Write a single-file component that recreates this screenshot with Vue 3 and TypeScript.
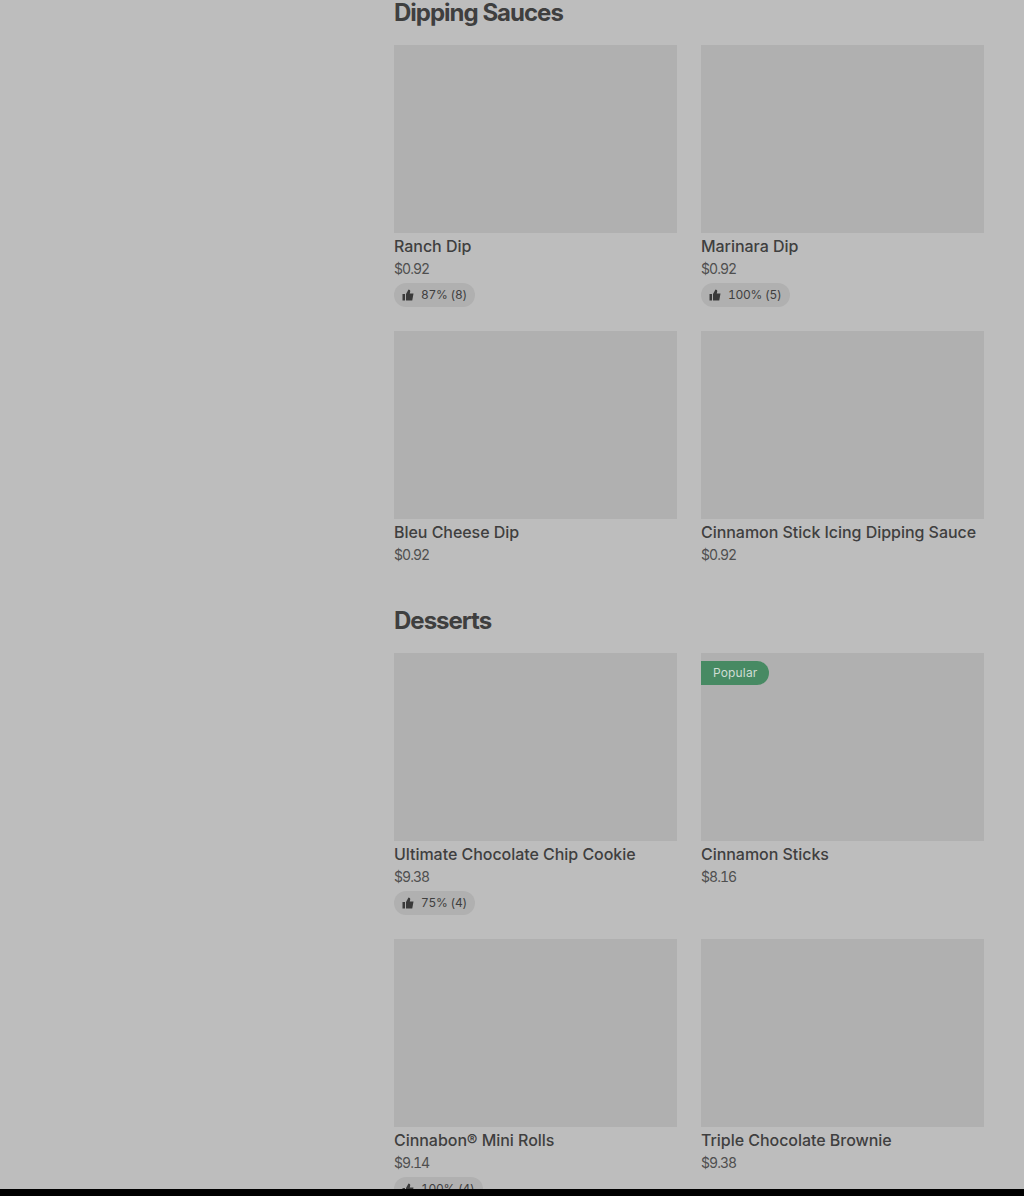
<script setup lang="ts">
interface Item {
  name: string;
  price: string;
  rating?: string;
  badge?: string;
}

interface Section {
  title: string;
  items: Item[];
}

const sections: Section[] = [
  {
    title: "Dipping Sauces",
    items: [
      { name: "Ranch Dip", price: "$0.92", rating: "87% (8)" },
      { name: "Marinara Dip", price: "$0.92", rating: "100% (5)" },
      { name: "Bleu Cheese Dip", price: "$0.92" },
      { name: "Cinnamon Stick Icing Dipping Sauce", price: "$0.92" },
    ],
  },
  {
    title: "Desserts",
    items: [
      { name: "Ultimate Chocolate Chip Cookie", price: "$9.38", rating: "75% (4)" },
      { name: "Cinnamon Sticks", price: "$8.16", badge: "Popular" },
      { name: "Cinnabon® Mini Rolls", price: "$9.14", rating: "100% (4)" },
      { name: "Triple Chocolate Brownie", price: "$9.38" },
    ],
  },
];
</script>

<template>
  <div class="page">
    <main class="menu">
      <section v-for="section in sections" :key="section.title" class="section">
        <h2>{{ section.title }}</h2>
        <div class="grid">
          <article v-for="item in section.items" :key="item.name" class="card">
            <div class="thumb">
              <span v-if="item.badge" class="badge">{{ item.badge }}</span>
            </div>
            <div class="name">{{ item.name }}</div>
            <div class="price">{{ item.price }}</div>
            <div v-if="item.rating" class="rating">
              <svg viewBox="0 0 24 24" width="12" height="12" aria-hidden="true">
                <path d="M1 10h5v13H1zM8 10l5-9c2 0 3.500 1.500 3.500 3.500L15.500 9H23l-2.500 14H8z" />
              </svg>
              <span class="score">{{ item.rating }}</span>
            </div>
          </article>
        </div>
      </section>
    </main>
  </div>
</template>

<style scoped>
.page {
  height: 1189px;
  overflow: hidden;
  background: #bdbdbd;
  font-family: Inter, "Liberation Sans", sans-serif;
  color: #3f3f3f;
}

.menu {
  margin: -3px 40px 0 394px;
  display: flex;
  flex-direction: column;
  gap: 40px;
}

h2 {
  margin: 0 0 16px;
  font-size: 24px;
  line-height: 32px;
  font-weight: 700;
  letter-spacing: -1px;
}

.grid {
  display: grid;
  grid-template-columns: 283px 283px;
  column-gap: 24px;
  row-gap: 24px;
}

.thumb {
  position: relative;
  height: 188px;
  background: #b0b0b0;
}

.badge {
  position: absolute;
  top: 8px;
  left: 0;
  height: 24px;
  padding: 0 12px 2px;
  box-sizing: border-box;
  display: flex;
  align-items: center;
  border-radius: 0 12px 12px 0;
  background: #478a63;
  color: #cfdcd4;
  font-size: 12px;
  letter-spacing: 0.15px;
}

.name {
  margin-top: 3px;
  font-size: 16px;
  line-height: 20px;
  font-weight: 500;
  letter-spacing: -0.04px;
}

.price {
  margin-top: 3px;
  font-size: 14px;
  line-height: 20px;
  letter-spacing: -0.95px;
  font-variant-numeric: tabular-nums;
  color: #4f4f4f;
}

.rating {
  margin-top: 4px;
  height: 24px;
  width: fit-content;
  padding: 0 8px;
  display: flex;
  align-items: center;
  gap: 7px;
  border-radius: 12px;
  background: #b0b0b0;
  font-size: 12px;
  letter-spacing: -0.25px;
  font-variant-numeric: tabular-nums;
}

.score {
  margin-top: -2px;
}

.rating svg {
  fill: #3a3a3a;
}
</style>

<style>
html,
body {
  background: #000;
}
</style>
